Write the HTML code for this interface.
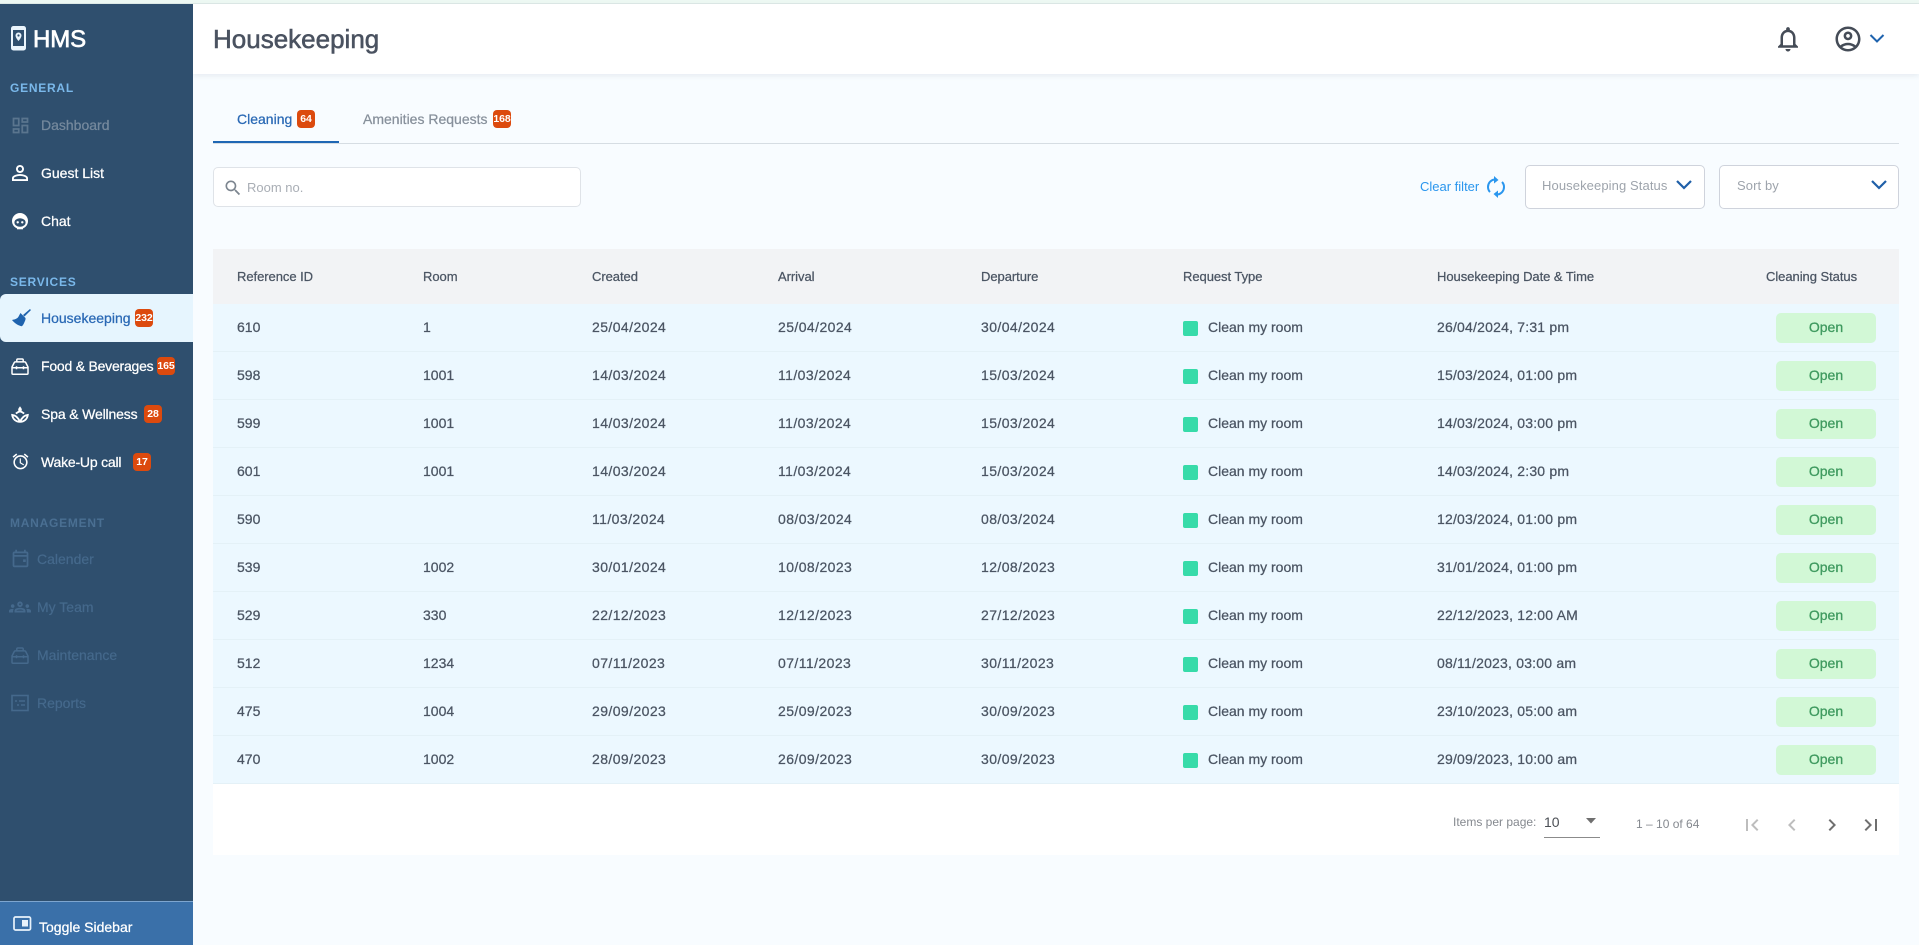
<!DOCTYPE html>
<html lang="en"><head><meta charset="utf-8"><title>Housekeeping</title>
<style>
*{box-sizing:border-box;margin:0;padding:0}
html,body{width:1919px;height:945px;overflow:hidden;background:#f8fcff;font-family:"Liberation Sans",Arial,sans-serif;color:#4b5563}
.a{position:absolute;white-space:nowrap}
svg{position:absolute;display:block}
#strip{left:0;top:0;width:1919px;height:4px;background:#edf8f3;border-bottom:1px solid #dde9e6}
#side{left:0;top:4px;width:193px;height:941px;background:#2f4f6e}
.lb{font-size:12px;font-weight:bold;letter-spacing:.75px;line-height:14px;left:10px;color:#7ab8ea}
.it{font-size:14px;line-height:20px;left:41px;color:#fff;-webkit-text-stroke:.25px currentColor}
.bd{width:18px;height:18px;border-radius:4px;background:#dc4a0e;color:#fff;font-size:10.5px;font-weight:bold;line-height:18px;text-align:center;letter-spacing:-.1px}
.off{color:#45698c;-webkit-text-stroke:.2px currentColor;font-size:14px;line-height:20px;left:37px}
.row{left:213px;width:1686px;height:48px;background:#ecf8ff;border-bottom:1px solid #e4f1f7}
.c{position:absolute;top:0;line-height:47px;font-size:14px;color:#4b5563;-webkit-text-stroke:.25px currentColor;white-space:nowrap}
.d{letter-spacing:.42px}
.t{letter-spacing:.2px}
.sq{position:absolute;left:970px;top:17px;width:15px;height:15px;border-radius:2px;background:#37dba9}
.op{position:absolute;left:1563px;top:9px;width:100px;height:30px;border-radius:5px;background:#d2f8d6;color:#3f9a5f;font-size:14px;font-weight:400;text-align:center;line-height:29px;-webkit-text-stroke:.3px currentColor}
.h{position:absolute;top:0;line-height:56px;font-size:13px;color:#4b5563;-webkit-text-stroke:.25px currentColor;white-space:nowrap;letter-spacing:-.05px}
.dd{top:165px;height:44px;width:180px;background:#fff;border:1px solid #cfd3dc;border-radius:5px}
</style></head><body>
<div class="a" id="strip"></div>
<div class="a" style="left:193px;top:4px;width:1726px;height:70px;background:#fff;box-shadow:0 2px 5px rgba(80,100,120,.1)"></div>
<div class="a" id="side"></div>

<svg style="left:11px;top:26px" width="16" height="25" viewBox="0 0 16 25"><rect width="15" height="24.5" rx="2.5" fill="#eaf5fd"/><rect x="2" y="4" width="11" height="16" fill="#2f4f6e"/><path d="M7.5 6.5a3 3 0 0 0-3 3c0 2.2 3 5.500 3 5.500s3-3.300 3-5.500a3 3 0 0 0-3-3z" fill="#eaf5fd"/><circle cx="7.500" cy="9.500" r="1.100" fill="#2f4f6e"/></svg>
<div class="a" style="left:33px;top:25px;font-size:24px;line-height:30px;color:#fff;-webkit-text-stroke:.7px #fff;letter-spacing:-.1px">HMS</div>

<div class="a lb" style="top:81px">GENERAL</div>
<svg style="left:9.500px;top:114.500px;opacity:.45" width="21" height="21" viewBox="0 0 24 24" fill="#8fa3b6"><path d="M19 5v2h-4V5h4M9 5v6H5V5h4m10 8v6h-4v-6h4M9 17v2H5v-2h4M21 3h-8v6h8V3zM11 3H3v10h8V3zm10 8h-8v10h8V11zm-10 4H3v6h8v-6z"/></svg>
<div class="a it" style="top:115px;color:#75899d">Dashboard</div>
<svg style="left:8px;top:161px" width="24" height="24" viewBox="0 0 24 24" fill="#fff"><path d="M12 5.900c1.160 0 2.100.94 2.100 2.100s-.94 2.100-2.100 2.100S9.900 9.160 9.900 8s.94-2.100 2.100-2.100m0 9c2.970 0 6.100 1.460 6.100 2.100v1.100H5.900V17c0-.64 3.130-2.100 6.100-2.100M12 4C9.790 4 8 5.790 8 8s1.790 4 4 4 4-1.790 4-4-1.790-4-4-4zm0 9c-2.670 0-8 1.340-8 4v3h16v-3c0-2.660-5.330-4-8-4z"/></svg>
<div class="a it" style="top:163px">Guest List</div>
<svg style="left:8px;top:209px" width="24" height="24" viewBox="0 0 24 24"><circle cx="12" cy="12" r="8" fill="#fff"/><ellipse cx="12" cy="13.500" rx="5.600" ry="4.300" fill="#2f4f6e"/><circle cx="9.700" cy="13.300" r="1.200" fill="#fff"/><circle cx="14.300" cy="13.300" r="1.200" fill="#fff"/><path d="M9 18.500h6v1.800H9z" fill="#fff"/></svg>
<div class="a it" style="top:211px">Chat</div>

<div class="a lb" style="top:275px">SERVICES</div>
<div class="a" style="left:0;top:294px;width:193px;height:48px;background:#e6f5fe;border-radius:6px 0 0 6px"></div>
<svg style="left:9px;top:306px" width="24" height="24" viewBox="0 0 24 24" fill="#1f63ae"><path d="M14 9L21 3l.9 1.100L15.500 10.500z"/><path d="M11.500 7l5 5c.3 1.300-.4 2.800-1.200 4.500-.7 1.700-1.500 3-2.500 3.800-3.200-.6-7-2.900-9.800-6.300 2-.3 3.500-.8 5-1.700 1.500-1 2.300-3.300 3.500-5.300z"/></svg>
<div class="a it" style="top:308px;color:#2a69b5">Housekeeping</div>
<div class="a bd" style="left:135px;top:309px">232</div>

<svg style="left:11px;top:358px" width="18" height="17" viewBox="0 0 18 17" fill="none" stroke="#fff" stroke-width="1.500"><path d="M1 9l2.300-4.500c.2-.4.5-.6 1-.6h9.400c.5 0 .8.2 1 .6L17 9v6.200c0 .6-.4 1-1 1H2c-.6 0-1-.4-1-1z"/><path d="M5.800 3.900V2c0-.6.4-1 1-1h4.400c.6 0 1 .4 1 1v1.900M1 9.800h16M5.500 8.300v3M12.500 8.300v3"/></svg>
<div class="a it" style="top:356px;letter-spacing:-.22px">Food &amp; Beverages</div>
<div class="a bd" style="left:157px;top:357px">165</div>

<svg style="left:9px;top:403px" width="22" height="22" viewBox="0 0 24 24" fill="none" stroke="#fff" stroke-width="2"><path d="M12 3.500c-1 1.500-2 2.500-2 3.800a2 2 0 0 0 4 0C14 6 13 5 12 3.500z" fill="#fff" stroke="none"/><path d="M12 20.500c-4.500 0-8-3-8.500-7.500 3 .2 6 2 8.500 7.500zm0 0c4.500 0 8-3 8.500-7.500-3 .2-6 2-8.500 7.500zM7.500 11.500c1.500-1.200 3-2 4.500-2.500 1.500.5 3 1.300 4.500 2.500"/></svg>
<div class="a it" style="top:404px;letter-spacing:-.15px">Spa &amp; Wellness</div>
<div class="a bd" style="left:144px;top:405px">28</div>

<svg style="left:10.500px;top:452px" width="19" height="19" viewBox="0 0 24 24" fill="#fff"><path d="M22 5.720l-4.600-3.860-1.290 1.530 4.600 3.860L22 5.720zM7.880 3.390L6.600 1.860 2 5.710l1.290 1.530 4.590-3.850zM12.500 8H11v6l4.750 2.850.75-1.230-4-2.370V8zM12 4c-4.970 0-9 4.030-9 9s4.030 9 9 9 9-4.030 9-9-4.030-9-9-9zm0 16c-3.870 0-7-3.130-7-7s3.130-7 7-7 7 3.130 7 7-3.130 7-7 7z"/></svg>
<div class="a it" style="top:452px;letter-spacing:-.2px">Wake-Up call</div>
<div class="a bd" style="left:133px;top:453px">17</div>

<div class="a lb" style="top:516px;color:#4a6f92">MANAGEMENT</div>
<svg style="left:9.500px;top:548px" width="21" height="21" viewBox="0 0 24 24" fill="#45698c"><path d="M19 4h-1V2h-2v2H8V2H6v2H5c-1.110 0-1.990.9-1.990 2L3 20c0 1.100.89 2 2 2h14c1.100 0 2-.9 2-2V6c0-1.100-.9-2-2-2zm0 16H5V10h14v10zm0-12H5V6h14v2zm-4 5h3v3h-3z"/></svg>
<div class="a off" style="top:549px">Calender</div>
<svg style="left:9px;top:596px" width="22" height="22" viewBox="0 0 24 24" fill="#45698c"><path d="M4 13c1.100 0 2-.9 2-2 0-1.100-.9-2-2-2s-2 .9-2 2c0 1.100.9 2 2 2zm1.130 1.100c-.37-.06-.74-.1-1.130-.1-.99 0-1.930.21-2.780.58C.48 14.900 0 15.620 0 16.430V18h4.500v-1.610c0-.83.23-1.610.63-2.290zM20 13c1.100 0 2-.9 2-2 0-1.100-.9-2-2-2s-2 .9-2 2c0 1.100.9 2 2 2zm4 3.430c0-.81-.48-1.530-1.220-1.850-.85-.37-1.790-.58-2.780-.58-.39 0-.76.04-1.130.1.4.68.63 1.460.63 2.290V18H24v-1.570zm-7.760-2.780c-1.170-.52-2.610-.9-4.240-.9-1.630 0-3.070.39-4.240.9C6.680 14.130 6 15.210 6 16.390V18h12v-1.610c0-1.180-.68-2.260-1.760-2.740zM8.070 16c.09-.23.13-.39.91-.69.97-.38 1.990-.56 3.020-.56s2.050.18 3.020.56c.77.3.81.46.91.69H8.070zM12 8c.55 0 1 .45 1 1s-.45 1-1 1-1-.45-1-1 .45-1 1-1m0-2c-1.660 0-3 1.340-3 3s1.340 3 3 3 3-1.340 3-3-1.340-3-3-3z"/></svg>
<div class="a off" style="top:597px">My Team</div>
<svg style="left:11px;top:647px" width="18" height="17" viewBox="0 0 18 17" fill="none" stroke="#45698c" stroke-width="1.500"><path d="M1 9l2.300-4.500c.2-.4.5-.6 1-.6h9.400c.5 0 .8.2 1 .6L17 9v6.200c0 .6-.4 1-1 1H2c-.6 0-1-.4-1-1z"/><path d="M5.800 3.900V2c0-.6.4-1 1-1h4.400c.6 0 1 .4 1 1v1.900M1 9.800h16M5.500 8.300v3M12.500 8.300v3"/></svg>
<div class="a off" style="top:645px">Maintenance</div>
<svg style="left:8px;top:691px" width="24" height="24" viewBox="0 0 24 24" fill="none" stroke="#45698c" stroke-width="1.600"><rect x="4" y="4.500" width="16" height="15"/><path d="M7 10h2M11 10h6M9 14h2M13 14h4"/></svg>
<div class="a off" style="top:693px">Reports</div>

<div class="a" style="left:0;top:901px;width:193px;height:44px;background:#3a70a9;border-top:1px solid #7da5cf"></div>
<svg style="left:13px;top:916px" width="19" height="16" viewBox="0 0 19 16"><rect x="1" y="1" width="16.500" height="13" rx="1.500" fill="none" stroke="#e8f2fb" stroke-width="1.700"/><rect x="9" y="4" width="6" height="6.500" fill="#e8f2fb"/></svg>
<div class="a it" style="left:39px;top:917px">Toggle Sidebar</div>

<div class="a" style="left:213px;top:21px;font-size:26px;line-height:36px;color:#4a5260;-webkit-text-stroke:.55px currentColor;letter-spacing:0">Housekeeping</div>
<svg style="left:1773px;top:24px" width="30" height="30" viewBox="0 0 24 24" fill="#454c57"><path d="M12 22c1.100 0 2-.9 2-2h-4c0 1.100.9 2 2 2zm6-6v-5c0-3.070-1.630-5.640-4.500-6.320V4c0-.83-.67-1.500-1.500-1.500s-1.500.67-1.500 1.500v.68C7.640 5.360 6 7.920 6 11v5l-2 2v1h16v-1l-2-2zm-2 1H8v-6c0-2.480 1.510-4.500 4-4.500s4 2.020 4 4.500v6z"/></svg>
<svg style="left:1833px;top:24px" width="30" height="30" viewBox="0 0 24 24" fill="#454c57"><path d="M12 2C6.480 2 2 6.480 2 12s4.480 10 10 10 10-4.480 10-10S17.520 2 12 2zM7.350 18.500C8.660 17.560 10.260 17 12 17s3.340.56 4.650 1.500c-1.310.94-2.910 1.500-4.650 1.500s-3.340-.56-4.650-1.500zm10.790-1.380C16.450 15.800 14.320 15 12 15s-4.450.8-6.140 2.120C4.700 15.730 4 13.950 4 12c0-4.420 3.580-8 8-8s8 3.580 8 8c0 1.950-.7 3.730-1.860 5.120zM12 6c-1.930 0-3.500 1.570-3.500 3.500S10.070 13 12 13s3.500-1.570 3.500-3.500S13.930 6 12 6zm0 5c-.83 0-1.500-.67-1.500-1.500S11.170 8 12 8s1.500.67 1.500 1.500S12.830 11 12 11z"/></svg>
<svg style="left:1869px;top:33px" width="16" height="11" viewBox="0 0 16 11"><path d="M1.500 2l6.500 6.500L14.500 2" fill="none" stroke="#1f63ae" stroke-width="2"/></svg>

<div class="a" style="left:213px;top:143px;width:1686px;height:1px;background:#d6dde3"></div>
<div class="a" style="left:213px;top:141px;width:126px;height:2px;background:#1f67b4"></div>
<div class="a" style="left:237px;top:109px;font-size:14px;line-height:20px;color:#2a69b5;-webkit-text-stroke:.25px currentColor">Cleaning</div>
<div class="a bd" style="left:297px;top:110px">64</div>
<div class="a" style="left:363px;top:109px;font-size:14px;line-height:20px;color:#87909b;-webkit-text-stroke:.25px currentColor">Amenities Requests</div>
<div class="a bd" style="left:493px;top:110px">168</div>

<div class="a" style="left:213px;top:167px;width:368px;height:40px;background:#fff;border:1px solid #dfe3e8;border-radius:5px"></div>
<svg style="left:223px;top:178px" width="20" height="20" viewBox="0 0 24 24" fill="#7c858f"><path d="M15.500 14h-.79l-.28-.27C15.410 12.590 16 11.110 16 9.500 16 5.910 13.090 3 9.500 3S3 5.910 3 9.500 5.910 16 9.500 16c1.610 0 3.090-.59 4.230-1.570l.27.28v.79l5 4.990L20.490 19l-4.990-5zm-6 0C7.010 14 5 11.990 5 9.500S7.010 5 9.500 5 14 7.010 14 9.500 11.990 14 9.500 14z"/></svg>
<div class="a" style="left:247px;top:179px;font-size:13px;line-height:18px;color:#a9aeb5">Room no.</div>

<div class="a" style="left:1420px;top:178px;font-size:13px;line-height:18px;color:#2a96ee">Clear filter</div>
<svg style="left:1482px;top:173px" width="28" height="28" viewBox="0 0 28 28" fill="none" stroke="#2a96ee" stroke-width="2"><path d="M12 6.500c-3.500.8-6 3.800-6 7.500 0 2 .8 3.800 2 5M16 21.500c3.500-.8 6-3.800 6-7.500 0-2-.8-3.800-2-5"/><path d="M12 3l4.500 4-4.500 3.500zM16 25l-4.500-4 4.500-3.500z" fill="#2a96ee" stroke="none"/></svg>

<div class="a dd" style="left:1525px"></div>
<div class="a" style="left:1542px;top:177px;font-size:13px;line-height:18px;color:#9ea4ac;letter-spacing:.1px">Housekeeping Status</div>
<svg style="left:1676px;top:179px" width="16" height="12" viewBox="0 0 16 12"><path d="M1 2l7 7 7-7" fill="none" stroke="#1f5fa8" stroke-width="2.200"/></svg>
<div class="a dd" style="left:1719px"></div>
<div class="a" style="left:1737px;top:177px;font-size:13px;line-height:18px;color:#9ea4ac;letter-spacing:.1px">Sort by</div>
<svg style="left:1871px;top:179px" width="16" height="12" viewBox="0 0 16 12"><path d="M1 2l7 7 7-7" fill="none" stroke="#1f5fa8" stroke-width="2.200"/></svg>

<div class="a" style="left:213px;top:249px;width:1686px;height:55px;background:#f2f3f5">
<span class="h" style="left:24px">Reference ID</span><span class="h" style="left:210px">Room</span><span class="h" style="left:379px">Created</span><span class="h" style="left:565px">Arrival</span><span class="h" style="left:768px">Departure</span><span class="h" style="left:970px">Request Type</span><span class="h" style="left:1224px">Housekeeping Date &amp; Time</span><span class="h" style="left:1553px">Cleaning Status</span>
</div>

<div class="a row" style="top:304px"><span class="c" style="left:24px">610</span><span class="c" style="left:210px">1</span><span class="c d" style="left:379px">25/04/2024</span><span class="c d" style="left:565px">25/04/2024</span><span class="c d" style="left:768px">30/04/2024</span><i class="sq"></i><span class="c" style="left:995px">Clean my room</span><span class="c t" style="left:1224px">26/04/2024, 7:31 pm</span><span class="op">Open</span></div>
<div class="a row" style="top:352px"><span class="c" style="left:24px">598</span><span class="c" style="left:210px">1001</span><span class="c d" style="left:379px">14/03/2024</span><span class="c d" style="left:565px">11/03/2024</span><span class="c d" style="left:768px">15/03/2024</span><i class="sq"></i><span class="c" style="left:995px">Clean my room</span><span class="c t" style="left:1224px">15/03/2024, 01:00 pm</span><span class="op">Open</span></div>
<div class="a row" style="top:400px"><span class="c" style="left:24px">599</span><span class="c" style="left:210px">1001</span><span class="c d" style="left:379px">14/03/2024</span><span class="c d" style="left:565px">11/03/2024</span><span class="c d" style="left:768px">15/03/2024</span><i class="sq"></i><span class="c" style="left:995px">Clean my room</span><span class="c t" style="left:1224px">14/03/2024, 03:00 pm</span><span class="op">Open</span></div>
<div class="a row" style="top:448px"><span class="c" style="left:24px">601</span><span class="c" style="left:210px">1001</span><span class="c d" style="left:379px">14/03/2024</span><span class="c d" style="left:565px">11/03/2024</span><span class="c d" style="left:768px">15/03/2024</span><i class="sq"></i><span class="c" style="left:995px">Clean my room</span><span class="c t" style="left:1224px">14/03/2024, 2:30 pm</span><span class="op">Open</span></div>
<div class="a row" style="top:496px"><span class="c" style="left:24px">590</span><span class="c d" style="left:379px">11/03/2024</span><span class="c d" style="left:565px">08/03/2024</span><span class="c d" style="left:768px">08/03/2024</span><i class="sq"></i><span class="c" style="left:995px">Clean my room</span><span class="c t" style="left:1224px">12/03/2024, 01:00 pm</span><span class="op">Open</span></div>
<div class="a row" style="top:544px"><span class="c" style="left:24px">539</span><span class="c" style="left:210px">1002</span><span class="c d" style="left:379px">30/01/2024</span><span class="c d" style="left:565px">10/08/2023</span><span class="c d" style="left:768px">12/08/2023</span><i class="sq"></i><span class="c" style="left:995px">Clean my room</span><span class="c t" style="left:1224px">31/01/2024, 01:00 pm</span><span class="op">Open</span></div>
<div class="a row" style="top:592px"><span class="c" style="left:24px">529</span><span class="c" style="left:210px">330</span><span class="c d" style="left:379px">22/12/2023</span><span class="c d" style="left:565px">12/12/2023</span><span class="c d" style="left:768px">27/12/2023</span><i class="sq"></i><span class="c" style="left:995px">Clean my room</span><span class="c t" style="left:1224px">22/12/2023, 12:00 AM</span><span class="op">Open</span></div>
<div class="a row" style="top:640px"><span class="c" style="left:24px">512</span><span class="c" style="left:210px">1234</span><span class="c d" style="left:379px">07/11/2023</span><span class="c d" style="left:565px">07/11/2023</span><span class="c d" style="left:768px">30/11/2023</span><i class="sq"></i><span class="c" style="left:995px">Clean my room</span><span class="c t" style="left:1224px">08/11/2023, 03:00 am</span><span class="op">Open</span></div>
<div class="a row" style="top:688px"><span class="c" style="left:24px">475</span><span class="c" style="left:210px">1004</span><span class="c d" style="left:379px">29/09/2023</span><span class="c d" style="left:565px">25/09/2023</span><span class="c d" style="left:768px">30/09/2023</span><i class="sq"></i><span class="c" style="left:995px">Clean my room</span><span class="c t" style="left:1224px">23/10/2023, 05:00 am</span><span class="op">Open</span></div>
<div class="a row" style="top:736px"><span class="c" style="left:24px">470</span><span class="c" style="left:210px">1002</span><span class="c d" style="left:379px">28/09/2023</span><span class="c d" style="left:565px">26/09/2023</span><span class="c d" style="left:768px">30/09/2023</span><i class="sq"></i><span class="c" style="left:995px">Clean my room</span><span class="c t" style="left:1224px">29/09/2023, 10:00 am</span><span class="op">Open</span></div>

<div class="a" style="left:213px;top:784px;width:1686px;height:71px;background:#fff"></div>
<div class="a" style="left:1453px;top:814px;font-size:12px;line-height:16px;color:#85898f">Items per page:</div>
<div class="a" style="left:1544px;top:813px;font-size:14px;line-height:18px;color:#4b4f55">10</div>
<div class="a" style="left:1544px;top:837px;width:56px;height:1px;background:#8b8b8b"></div>
<svg style="left:1586px;top:818px" width="10" height="6"><path d="M0 0h10L5 5.500z" fill="#6f6f6f"/></svg>
<div class="a" style="left:1636px;top:816px;font-size:12px;line-height:16px;color:#85898f">1 – 10 of 64</div>
<svg style="left:1740px;top:813px" width="24" height="24" viewBox="0 0 24 24" fill="#bdbdbd"><path d="M18.410 16.590L13.820 12l4.590-4.590L17 6l-6 6 6 6zM6 6h2v12H6z"/></svg>
<svg style="left:1780px;top:813px" width="24" height="24" viewBox="0 0 24 24" fill="#bdbdbd"><path d="M15.410 7.410L14 6l-6 6 6 6 1.410-1.410L10.830 12z"/></svg>
<svg style="left:1820px;top:813px" width="24" height="24" viewBox="0 0 24 24" fill="#6f6f6f"><path d="M10 6L8.590 7.410 13.170 12l-4.580 4.590L10 18l6-6z"/></svg>
<svg style="left:1859px;top:813px" width="24" height="24" viewBox="0 0 24 24" fill="#6f6f6f"><path d="M5.590 7.410L10.180 12l-4.590 4.590L7 18l6-6-6-6zM16 6h2v12h-2z"/></svg>
</body></html>
